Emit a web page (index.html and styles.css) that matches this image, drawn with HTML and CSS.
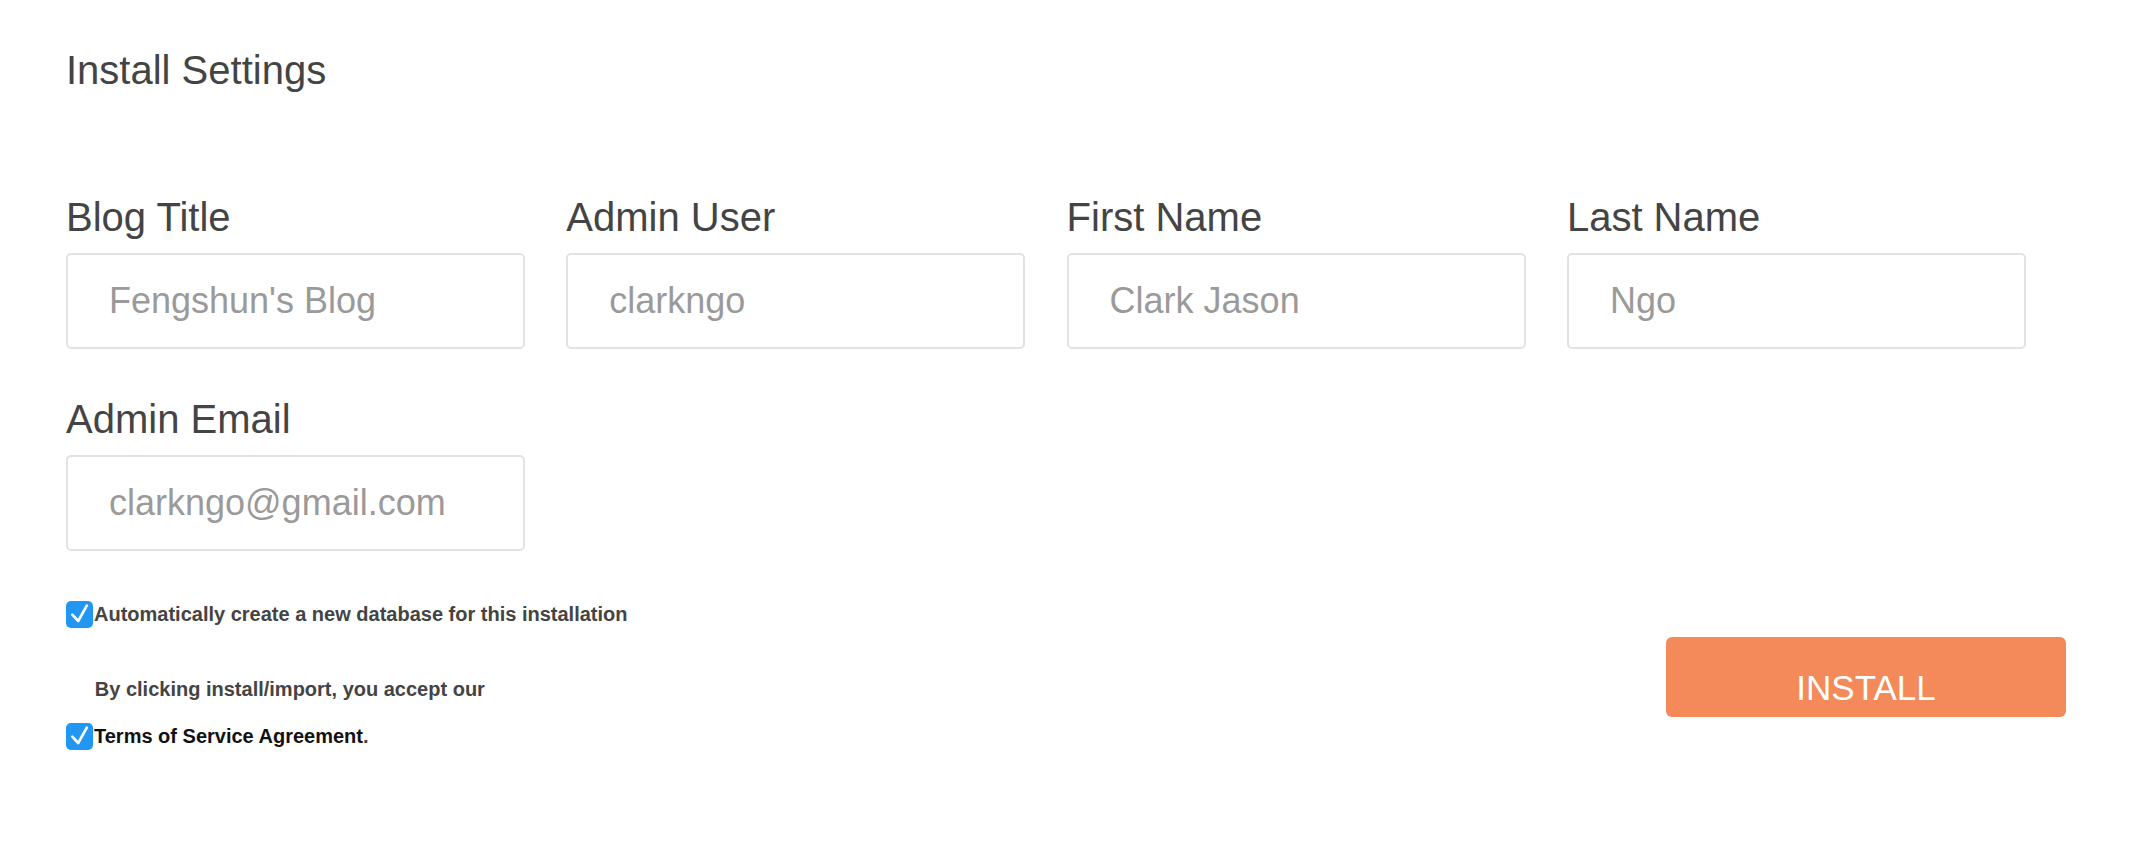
FILE: index.html
```html
<!DOCTYPE html>
<html lang="en">
<head>
<meta charset="utf-8">
<title>Install Settings</title>
<link rel="stylesheet" href="styles.css">
</head>
<body>
<main class="page">
  <h1 class="title">Install Settings</h1>
  <form class="form">
    <div class="fields">
      <label class="field">
        <span class="field-label">Blog Title</span>
        <input class="field-input" type="text" placeholder="Fengshun's Blog">
      </label>
      <label class="field">
        <span class="field-label">Admin User</span>
        <input class="field-input" type="text" placeholder="clarkngo">
      </label>
      <label class="field">
        <span class="field-label">First Name</span>
        <input class="field-input" type="text" placeholder="Clark Jason">
      </label>
      <label class="field">
        <span class="field-label">Last Name</span>
        <input class="field-input" type="text" placeholder="Ngo">
      </label>
      <label class="field">
        <span class="field-label">Admin Email</span>
        <input class="field-input" type="email" placeholder="clarkngo@gmail.com">
      </label>
    </div>
    <div class="bottom">
      <div class="agreements">
        <div class="check-row">
          <span class="checkbox"><svg viewBox="0 0 27 27" width="27" height="27"><path d="M6.3 13.6 L12.2 20 L20.8 4.6" fill="none" stroke="#fff" stroke-width="2.6" stroke-linecap="round" stroke-linejoin="round"/></svg></span>
          <span class="check-text">Automatically create a new database for this installation</span>
        </div>
        <p class="notice">By clicking install/import, you accept our</p>
        <div class="check-row check-row-terms">
          <span class="checkbox"><svg viewBox="0 0 27 27" width="27" height="27"><path d="M6.3 13.6 L12.2 20 L20.8 4.6" fill="none" stroke="#fff" stroke-width="2.6" stroke-linecap="round" stroke-linejoin="round"/></svg></span>
          <span class="check-text"><a class="terms-link" href="#">Terms of Service Agreement</a>.</span>
        </div>
      </div>
      <button class="install-btn" type="button">INSTALL</button>
    </div>
  </form>
</main>
</body>
</html>
```

FILE: styles.css
```css
* {
  box-sizing: border-box;
}

html, body {
  margin: 0;
  padding: 0;
  background: #ffffff;
}

body {
  font-family: "Liberation Sans", Arial, Helvetica, sans-serif;
  color: #444444;
}

.page {
  padding: 50px 88px 0 66px;
}

.title {
  margin: 0;
  font-size: 40px;
  line-height: 40px;
  font-weight: normal;
  color: #444444;
}

.form {
  margin-top: 107px;
}

.fields {
  display: grid;
  grid-template-columns: repeat(4, 459px);
  column-gap: 41.3px;
  row-gap: 50.5px;
}

.field {
  display: flex;
  flex-direction: column;
}

.field-label {
  font-size: 40px;
  line-height: 40px;
  color: #444444;
  margin-bottom: 15.5px;
}

.field-input {
  display: block;
  width: 459px;
  height: 96px;
  margin: 0;
  padding: 0 0 0 41px;
  border: 2px solid #e2e2e2;
  border-radius: 5px;
  background: #ffffff;
  font-family: "Liberation Sans", Arial, Helvetica, sans-serif;
  font-size: 36px;
  color: #444444;
  outline: none;
}

.field-input::placeholder {
  color: #9a9a9a;
  opacity: 1;
}

.bottom {
  display: flex;
  justify-content: space-between;
  align-items: flex-start;
  margin-top: 50px;
}

.agreements {
  display: flex;
  flex-direction: column;
}

.check-row {
  display: flex;
  align-items: center;
  height: 27px;
}

.check-row-terms {
  margin-top: 20px;
}

.checkbox {
  display: block;
  width: 27px;
  height: 27px;
  border-radius: 5px;
  background: #2196f3;
  margin-right: 1px;
  flex: none;
}

.checkbox svg {
  display: block;
}

.check-text {
  font-size: 20px;
  line-height: 27px;
  font-weight: bold;
  color: #444444;
}

.notice {
  margin: 48px 0 0 28.8px;
  font-size: 20px;
  line-height: 27px;
  font-weight: bold;
  color: #444444;
}

.terms-link {
  color: #111111;
  text-decoration: none;
}

.install-btn {
  margin-top: 36px;
  width: 400px;
  height: 80px;
  padding: 33px 0 0;
  border: none;
  border-radius: 6px;
  background: #f48a5a;
  color: #ffffff;
  font-family: "Liberation Sans", Arial, Helvetica, sans-serif;
  font-size: 35px;
  line-height: 35px;
  text-align: center;
  display: flex;
  justify-content: center;
  align-items: flex-start;
}
```
